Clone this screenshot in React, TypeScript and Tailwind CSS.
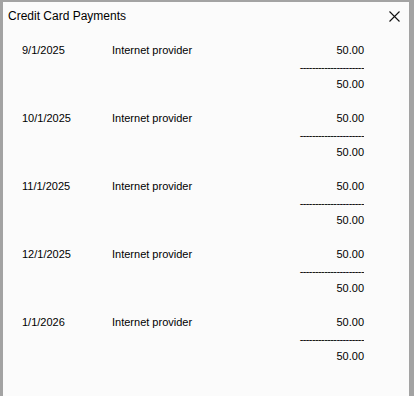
const payments = [
  { date: "9/1/2025", desc: "Internet provider", amount: "50.00", total: "50.00" },
  { date: "10/1/2025", desc: "Internet provider", amount: "50.00", total: "50.00" },
  { date: "11/1/2025", desc: "Internet provider", amount: "50.00", total: "50.00" },
  { date: "12/1/2025", desc: "Internet provider", amount: "50.00", total: "50.00" },
  { date: "1/1/2026", desc: "Internet provider", amount: "50.00", total: "50.00" },
];

export default function App() {
  return (
    <div className="w-[414px] h-[396px] bg-[#a3a3a3] pl-[3px] pt-[2px] pr-[5px] overflow-hidden font-['Liberation_Sans',Arial,sans-serif] text-black">
      <div className="h-full bg-[#fbfbfb] flex flex-col">
        {/* title bar */}
        <div className="h-[28px] flex items-center justify-between pl-[5px] pr-[9px]">
          <span className="text-[12px] leading-none">Credit Card Payments</span>
          <svg width="11" height="11" viewBox="0 0 11 11" className="block">
            <path d="M0.5 0.5 L10.5 10.5 M10.5 0.5 L0.5 10.5" stroke="#111" strokeWidth="1.1" />
          </svg>
        </div>

        {/* rows */}
        <div className="flex flex-col pt-[13px] pl-[19px] pr-[45px] text-[11px]">
          {payments.map((p) => (
            <div key={p.date} className="h-[68px] flex flex-col">
              <div className="h-[14px] leading-[14px] flex">
                <span className="w-[90px]">{p.date}</span>
                <span className="flex-1">{p.desc}</span>
                <span>{p.amount}</span>
              </div>
              <div className="h-[20px] leading-[14px] pt-[3px] flex justify-end tracking-[-0.6px] overflow-hidden">
                <span>---------------------</span>
              </div>
              <div className="h-[14px] leading-[14px] flex justify-end">
                <span>{p.total}</span>
              </div>
            </div>
          ))}
        </div>
      </div>
    </div>
  );
}
